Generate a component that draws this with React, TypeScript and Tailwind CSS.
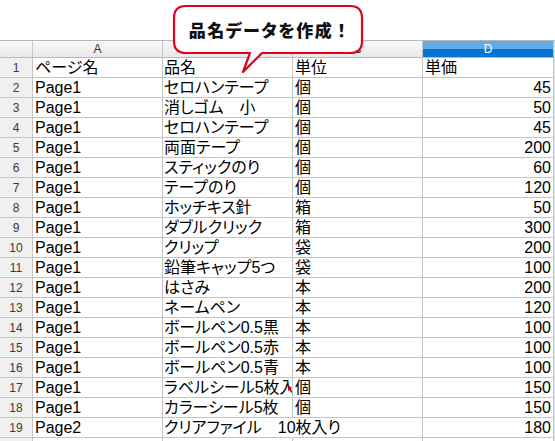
import React from "react";

type Row = [string, string, string, string];

const rows: Row[] = [
  ["ページ名", "品名", "単位", "単価"],
  ["Page1", "セロハンテープ", "個", "45"],
  ["Page1", "消しゴム　小", "個", "50"],
  ["Page1", "セロハンテープ", "個", "45"],
  ["Page1", "両面テープ", "個", "200"],
  ["Page1", "スティックのり", "個", "60"],
  ["Page1", "テープのり", "個", "120"],
  ["Page1", "ホッチキス針", "箱", "50"],
  ["Page1", "ダブルクリック", "箱", "300"],
  ["Page1", "クリップ", "袋", "200"],
  ["Page1", "鉛筆キャップ5つ", "袋", "100"],
  ["Page1", "はさみ", "本", "200"],
  ["Page1", "ネームペン", "本", "120"],
  ["Page1", "ボールペン0.5黒", "本", "100"],
  ["Page1", "ボールペン0.5赤", "本", "100"],
  ["Page1", "ボールペン0.5青", "本", "100"],
  ["Page1", "ラベルシール5枚入り", "個", "150"],
  ["Page1", "カラーシール5枚", "個", "150"],
  ["Page2", "クリアファイル　10枚入り", "", "180"],
];

function HeaderRow() {
  const cell =
    "h-full flex items-center justify-center border-r border-[#c4c4c4] bg-gradient-to-b from-[#f8f8f8] to-[#e9e9e9] text-[12px] text-[#333]";
  return (
    <div className="flex h-[18px] border-t border-b border-[#b8b8b8]">
      <div className={`w-[33px] ${cell}`}></div>
      <div className={`w-[130px] ${cell}`}>A</div>
      <div className={`w-[130px] ${cell}`}>B</div>
      <div className={`w-[130px] ${cell}`}>C</div>
      <div className="relative w-[131px] h-full flex flex-col border-r border-[#c4c4c4] text-[12px] text-white">
        <div className="h-[8px] bg-[#62abe6]"></div>
        <div className="flex-1 bg-[#0474d2]"></div>
        <div className="absolute inset-0 flex items-center justify-center">D</div>
      </div>
      <div className="flex-1 bg-[#e6e6e6]"></div>
    </div>
  );
}

function DataRow({ r, i }: { r: Row; i: number }) {
  const overflowIntoC = r[2] === "" && r[1] !== "";
  const clipped = !overflowIntoC && r[1].length >= 10;
  const txt = "h-full flex items-end leading-[19px] whitespace-nowrap";
  return (
    <div className="flex h-[20px]">
      <div className="w-[33px] h-full flex items-center justify-center bg-[#f0f0f0] border-r border-b border-[#c4c4c4] text-[12px] text-[#3a3a3a]">
        {i + 1}
      </div>
      <div className={`w-[130px] ${txt} pl-[2px] border-r border-b border-[#c4c4c4] overflow-hidden`}>
        {r[0]}
      </div>
      <div
        className={`w-[130px] ${txt} pl-[1px] border-b border-[#c4c4c4] relative ${
          overflowIntoC ? "border-r border-r-transparent overflow-visible" : "border-r overflow-hidden"
        }`}
      >
        {r[1]}
        {clipped && (
          <div className="absolute right-0 top-[7px] w-0 h-0 border-t-[3px] border-b-[3px] border-l-[4px] border-t-transparent border-b-transparent border-l-[#c00000]"></div>
        )}
      </div>
      <div className={`w-[130px] ${txt} pl-[2px] border-r border-b border-[#c4c4c4] overflow-hidden`}>
        {r[2]}
      </div>
      <div
        className={`w-[131px] ${txt} border-r border-b border-[#c4c4c4] overflow-hidden ${
          i === 0 ? "pl-[2px]" : "justify-end pr-[2px]"
        }`}
      >
        {r[3]}
      </div>
      <div className="flex-1 bg-[#e6e6e6]"></div>
    </div>
  );
}

export default function App() {
  return (
    <div className="relative w-[555px] h-[441px] overflow-hidden bg-white font-['Liberation_Sans','Noto_Sans_CJK_JP',sans-serif] text-[16px] text-black [font-feature-settings:'palt']">
      <div className="h-[40px]"></div>
      <HeaderRow />
      {rows.map((r, i) => (
        <DataRow key={i} r={r} i={i} />
      ))}
      <div className="flex h-[20px]">
        <div className="w-[33px] h-full bg-[#f0f0f0] border-r border-[#c4c4c4]"></div>
        <div className="w-[130px] h-full border-r border-[#c4c4c4]"></div>
        <div className="w-[130px] h-full border-r border-[#c4c4c4]"></div>
        <div className="w-[130px] h-full border-r border-[#c4c4c4]"></div>
        <div className="w-[131px] h-full border-r border-[#c4c4c4]"></div>
        <div className="flex-1 bg-[#e6e6e6]"></div>
      </div>

      <svg className="absolute left-0 top-0" width="555" height="80" viewBox="0 0 555 80">
        <path
          d="M186 6 H350 Q362 6 362 18 V41 Q362 53 350 53 H262 L243 72 L250 53 H186 Q174 53 174 41 V18 Q174 6 186 6 Z"
          fill="white"
          stroke="#e2001a"
          strokeWidth="2.2"
          strokeLinejoin="round"
        />
      </svg>
      <div className="absolute left-[174px] top-[6px] w-[188px] h-[47px] flex items-center justify-center font-['Noto_Sans_CJK_JP',sans-serif] font-black text-[17px] text-[#111] tracking-[1.5px] [font-feature-settings:'normal']">
        品名データを作成<span className="ml-[4px]">！</span>
      </div>
    </div>
  );
}
